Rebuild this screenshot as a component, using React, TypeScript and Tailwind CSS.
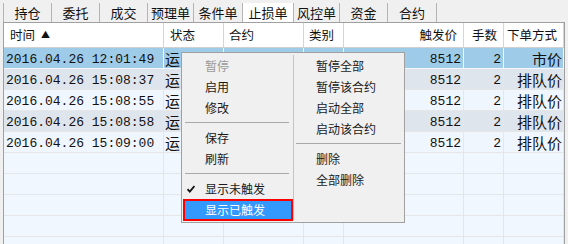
import React from 'react';

const cjk = { fontFamily: '"Noto Sans CJK SC", "Noto Sans", sans-serif' };
const mono = { fontFamily: '"Liberation Mono", "Noto Sans CJK SC", monospace' };

const tabs = [
    { label: '持仓', w: 'w-[48px]' },
    { label: '委托', w: 'w-[48px]' },
    { label: '成交', w: 'w-[48px]' },
    { label: '预理单', w: 'w-[46px]' },
    { label: '条件单', w: 'w-[49px]' },
    { label: '止损单', w: 'w-[51px]', active: true },
    { label: '风控单', w: 'w-[46px]' },
    { label: '资金', w: 'w-[48px]' },
    { label: '合约', w: 'w-[49px]' },
];

const rows = [
    { time: '2016.04.26 12:01:49', type: '市价' },
    { time: '2016.04.26 15:08:37', type: '排队价' },
    { time: '2016.04.26 15:08:55', type: '排队价' },
    { time: '2016.04.26 15:08:58', type: '排队价' },
    { time: '2016.04.26 15:09:00', type: '排队价' },
];

const cols = 'grid grid-cols-[160px_60px_80px_40px_120px_40px_60px]';

const MenuItem: React.FC<{ label: string; disabled?: boolean; checked?: boolean; pl: string }> = ({ label, disabled, checked, pl }) => (
    <div className={`relative h-[21px] flex items-center ${pl} text-[12px] ${disabled ? 'text-[#9a9a9a]' : 'text-[#1a1a1a]'}`} style={cjk}>
        {checked && (
            <svg className="absolute left-[5px] top-[7px] w-[8px] h-[8px]" viewBox="0 0 8 8">
                <path d="M0.5 4.2 L2.8 6.6 L7.5 1" stroke="#111" strokeWidth="1.8" fill="none" />
            </svg>
        )}
        {label}
    </div>
);

const Sep: React.FC<{ mx: string }> = ({ mx }) => (
    <div className={`h-[9px] flex items-center ${mx}`}>
        <div className="h-px w-full bg-[#a8a8a8]" />
    </div>
);

export default function App() {
    return (
        <div className="relative w-[568px] h-[244px] overflow-hidden bg-[#f0f0f0]">
            {/* tab strip */}
            <div className="h-[22px] flex pl-[3px] pt-[3px]">
                {tabs.map((t) => (
                    <div
                        key={t.label}
                        className={`${t.w} h-[19px] flex items-center justify-center border-l border-[#b4b4b4] text-[13px] text-[#111] ${t.active ? 'bg-white' : ''}`}
                        style={cjk}
                    >
                        {t.label}
                    </div>
                ))}
                <div className="border-l border-[#b4b4b4] h-[19px]" />
            </div>

            {/* table panel */}
            <div className="ml-[3px] w-[562px] h-[222px] border-l border-t border-r border-[#a0a0a0] bg-[#f0f7ff]">
                <div className={`${cols} h-[25px] bg-white border-b border-[#d0d0d0] text-[12.5px] text-[#111]`} style={cjk}>
                    <div className="flex items-center pl-[6px] gap-[6px] border-r border-[#d5d5d5]">
                        时间 <span className="text-[9px]">▲</span>
                    </div>
                    <div className="flex items-center pl-[6px] border-r border-[#d5d5d5]">状态</div>
                    <div className="flex items-center pl-[5px] border-r border-[#d5d5d5]">合约</div>
                    <div className="flex items-center pl-[5px] border-r border-[#d5d5d5]">类别</div>
                    <div className="flex items-center justify-end pr-[6px] border-r border-[#d5d5d5]">触发价</div>
                    <div className="flex items-center justify-end pr-[6px] border-r border-[#d5d5d5]">手数</div>
                    <div className="flex items-center justify-end pr-[6px] border-r border-[#d5d5d5]">下单方式</div>
                </div>

                {rows.map((r, i) => {
                    const bg = i === 0 ? 'bg-[#9ecbe7]' : i % 2 === 1 ? 'bg-[#dfe5ec]' : 'bg-[#f0f6fe]';
                    const line = i === 0 ? 'border-[#f4f8fc]' : 'border-[#e6e6e6]';
                    return (
                        <div key={r.time} className={`${cols} h-[21px] ${bg} border-b ${line} text-[#111]`}>
                            <div className={`flex items-center pl-[2px] text-[13px] border-r ${line}`} style={mono}>{r.time}</div>
                            {/* status, contract and kind sit under the open menu */}
                            <div className={`flex items-center pl-[1px] text-[15px] border-r ${line}`} style={cjk}>
                                <span className="w-[16px] overflow-hidden whitespace-nowrap">运</span>
                            </div>
                            <div className={`border-r ${line}`} />
                            <div className={`border-r ${line}`} />
                            <div className={`flex items-center justify-end pr-[2px] text-[13px] border-r ${line}`} style={mono}>8512</div>
                            <div className={`flex items-center justify-end pr-[2px] text-[13px] border-r ${line}`} style={mono}>2</div>
                            <div className={`flex items-center justify-end pr-[1px] text-[15px] border-r ${line}`} style={cjk}>{r.type}</div>
                        </div>
                    );
                })}

                {[0, 1, 2, 3, 4].map((k) => (
                    <div key={k} className={`${cols} h-[21px] border-b border-[#e6e6e6]`}>
                        {[0, 1, 2, 3, 4, 5, 6].map((c) => (
                            <div key={c} className="border-r border-[#e6e6e6]" />
                        ))}
                    </div>
                ))}
            </div>

            {/* context menu */}
            <div className="absolute left-[181px] top-[52px] w-[224px] h-[171px] border border-[#a0a0a0] bg-[#f0f0f0] flex">
                <div className="w-[111px] pt-[2px]">
                    <MenuItem label="暂停" disabled pl="pl-[23px]" />
                    <MenuItem label="启用" pl="pl-[23px]" />
                    <MenuItem label="修改" pl="pl-[23px]" />
                    <Sep mx="ml-[3px] mr-[4px]" />
                    <MenuItem label="保存" pl="pl-[23px]" />
                    <MenuItem label="刷新" pl="pl-[23px]" />
                    <Sep mx="ml-[3px] mr-[4px]" />
                    <MenuItem label="显示未触发" checked pl="pl-[23px]" />
                    <div className="ml-[1px] h-[22px] border-2 border-[#ff0000] bg-[#3399ff] flex items-center pl-[20px] text-[12px] text-white" style={cjk}>
                        显示已触发
                    </div>
                </div>
                <div className="w-px my-[2px] bg-[#c4c4c4]" />
                <div className="flex-1 pt-[2px]">
                    <MenuItem label="暂停全部" pl="pl-[22px]" />
                    <MenuItem label="暂停该合约" pl="pl-[22px]" />
                    <MenuItem label="启动全部" pl="pl-[22px]" />
                    <MenuItem label="启动该合约" pl="pl-[22px]" />
                    <Sep mx="ml-[2px] mr-[3px]" />
                    <MenuItem label="删除" pl="pl-[22px]" />
                    <MenuItem label="全部删除" pl="pl-[22px]" />
                </div>
            </div>
        </div>
    );
}
